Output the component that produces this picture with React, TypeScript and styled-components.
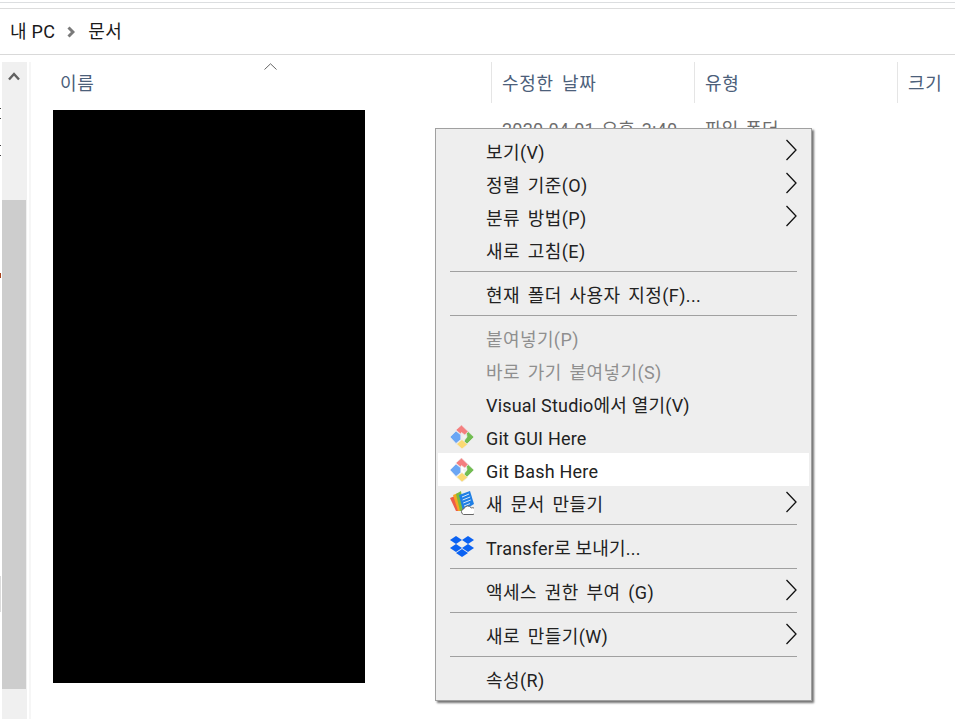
import React from "react";
import styled, { createGlobalStyle } from "styled-components";

const Global = createGlobalStyle`
  html, body { margin: 0; padding: 0; background: #fff; }
  body {
    font-family: Roboto, "Noto Sans CJK KR", sans-serif;
    overflow: hidden;
  }
  #root { height: 719px; }
`;

const Page = styled.div`
  position: relative;
  width: 955px;
  height: 719px;
  display: flex;
  flex-direction: column;
  overflow: hidden;
  background: #fff;
`;

const TopStrip = styled.div`
  height: 5px;
  margin-top: 2px;
  border-top: 1px solid #dcdee0;
  border-bottom: 1px solid #dcdcdc;
  flex: none;
`;

const Breadcrumb = styled.nav`
  height: 45px;
  flex: none;
  display: flex;
  align-items: center;
  padding-left: 10px;
  border-bottom: 1px solid #d9d9d9;
  font-size: 18px;
  line-height: 24px;
  color: #1a1a1a;
`;

const Crumb = styled.span`
  white-space: nowrap;
  letter-spacing: 0.3px;
`;

const CrumbSep = styled.svg`
  width: 8px;
  height: 12px;
  margin: 0 13px 0 12px;
  flex: none;
`;

const Body = styled.div`
  flex: 1;
  min-height: 0;
  display: flex;
  padding-top: 7px;
`;

const EdgeStrip = styled.div`
  width: 2px;
  flex: none;
  display: flex;
  flex-direction: column;
`;

const EdgeMark = styled.i<{ $h: number; $gap: number; $c: string }>`
  display: block;
  width: 1px;
  height: ${(p) => p.$h}px;
  margin-top: ${(p) => p.$gap}px;
  background: ${(p) => p.$c};
`;

const ScrollTrack = styled.div`
  width: 25px;
  flex: none;
  background: #f0f0f0;
  display: flex;
  flex-direction: column;
`;

const ScrollButton = styled.div`
  height: 138px;
  flex: none;
  display: flex;
  justify-content: center;
  align-items: flex-start;
  padding: 10px 1px 0 0;
  box-sizing: border-box;
`;

const ScrollThumb = styled.div`
  width: 24px;
  height: 489px;
  background: #cdcdcd;
`;

const Gutter = styled.div`
  width: 2px;
  margin-left: 2px;
  flex: none;
  background: #f6f6f6;
`;

const Content = styled.div`
  flex: 1;
  min-width: 0;
  display: flex;
  flex-direction: column;
`;

const Columns = styled.div`
  display: grid;
  grid-template-columns: 460px 203px 203px 1fr;
`;

const HeaderRow = styled(Columns)`
  height: 41px;
  position: relative;
`;

const HeaderCell = styled.div<{ $first?: boolean }>`
  display: flex;
  align-items: center;
  padding-left: ${(p) => (p.$first ? "29px" : "10px")};
  padding-top: 2px;
  border-left: ${(p) => (p.$first ? "none" : "1px solid #e5e5e5")};
  font-size: 18px;
  line-height: 24px;
  letter-spacing: 0.7px;
  word-spacing: 3px;
  color: #4c607a;
  white-space: nowrap;
`;

const SortMark = styled.svg`
  position: absolute;
  left: 233px;
  top: 1px;
  width: 13px;
  height: 7px;
`;

const FileRow = styled(Columns)`
  margin-top: 7px;
`;

const NameCell = styled.div`
  padding-left: 22px;
`;

const Redaction = styled.div`
  width: 312px;
  height: 573px;
  background: #000;
`;

const DataCell = styled.div`
  padding: 8px 0 0 11px;
  font-size: 18px;
  letter-spacing: 0.2px;
  word-spacing: 2px;
  line-height: 24px;
  color: #6d6d6d;
  white-space: nowrap;
`;

const Menu = styled.div`
  position: absolute;
  left: 435px;
  top: 128px;
  width: 377px;
  box-sizing: border-box;
  border: 1px solid #a0a0a0;
  background: #eeeeee;
  padding: 5px 2px;
  box-shadow: 2px 2px 2px rgba(0, 0, 0, 0.55);
  color: #1a1a1a;
`;

const Item = styled.div<{ $active?: boolean; $disabled?: boolean }>`
  height: 33px;
  display: flex;
  align-items: center;
  padding: 0 12px;
  font-size: 18px;
  line-height: 24px;
  background: ${(p) => (p.$active ? "#fff" : "transparent")};
  color: ${(p) => (p.$disabled ? "#8f8f8f" : "#222")};
`;

const IconSlot = styled.span`
  width: 24px;
  height: 24px;
  flex: none;
  margin-right: 12px;
  display: flex;
  align-items: center;
  justify-content: center;
`;

const Label = styled.span<{ $latin?: boolean }>`
  flex: 1;
  white-space: nowrap;
  padding-top: 4px;
  letter-spacing: ${(p) => (p.$latin ? "0.2px" : "0.4px")};
  word-spacing: ${(p) => (p.$latin ? "0" : "3px")};
`;

const Arrow = styled.svg`
  width: 12px;
  height: 22px;
  flex: none;
  margin-top: -2px;
`;

const Separator = styled.div`
  height: 1px;
  margin: 5px 12px;
  background: #a0a0a0;
`;

const Chevron = () => (
  <Arrow viewBox="0 0 12 22">
    <polyline points="1.5,1 11,11 1.5,21" fill="none" stroke="#111" strokeWidth="1.3" />
  </Arrow>
);

const GitIcon = () => (
  <svg width="24" height="24" viewBox="0 0 24 24">
    <g stroke="#eeeeee" strokeWidth="0.7">
      <polygon points="5.8,5 11.5,0 18.2,6.6 14.8,10 11.5,7.5 10.5,9" fill="#f47f7f" />
      <polygon points="16.5,8.5 18.2,6.6 24,12 16.5,19.5 14,16.5 15,14.5 17,12" fill="#72bd52" />
      <polygon points="12,14.5 17.5,19.5 12,24 6.5,19" fill="#fbd972" />
      <polygon points="0,12 6,6 10.8,9.8 10.8,14.5 6,18.5" fill="#6ba6f4" />
    </g>
    <circle cx="14.6" cy="12" r="1.6" fill="#f2f2f2" />
  </svg>
);

const DocsIcon = () => (
  <svg width="24" height="24" viewBox="0 0 24 24">
    <polygon points="0,7 5,5 10,20 6,20" fill="#ee5a4a" />
    <polygon points="3,4 8,2 12,20 8,20" fill="#f5a623" />
    <polygon points="6,3 11,0 14,20 10,20" fill="#7dbb3c" />
    <polygon points="9,4 20,0 24,13 13,20" fill="#1f7fe5" />
    <path d="M12 6l7-3M12.6 9l7.6-3M13.2 12l7.6-3M14 15l6-2.4" stroke="#d5e9fb" strokeWidth="1" />
    <path d="M13.5 23.5a3 3 0 0 1 .5-5.8a4 4 0 0 1 7.2-.8a3.3 3.3 0 0 1 1.8 6.6z" fill="#fff" stroke="#666" strokeWidth="1" />
  </svg>
);

const DropboxIcon = () => (
  <svg width="24" height="22" viewBox="0 0 24 22">
    <g fill="#0b62f2">
      <polygon points="6,0 12,4 6,8 0,4" />
      <polygon points="18,0 24,4 18,8 12,4" />
      <polygon points="6,8 12,12 6,16 0,12" />
      <polygon points="18,8 24,12 18,16 12,12" />
      <polygon points="12,13 18,17 12,21 6,17" />
    </g>
  </svg>
);

type Row =
  | { sep: true }
  | {
      sep?: false;
      label: string;
      icon?: React.ReactNode;
      sub?: boolean;
      disabled?: boolean;
      active?: boolean;
      latin?: boolean;
    };

const rows: Row[] = [
  { label: "보기(V)", sub: true },
  { label: "정렬 기준(O)", sub: true },
  { label: "분류 방법(P)", sub: true },
  { label: "새로 고침(E)" },
  { sep: true },
  { label: "현재 폴더 사용자 지정(F)..." },
  { sep: true },
  { label: "붙여넣기(P)", disabled: true },
  { label: "바로 가기 붙여넣기(S)", disabled: true },
  { label: "Visual Studio에서 열기(V)", latin: true },
  { label: "Git GUI Here", icon: <GitIcon />, latin: true },
  { label: "Git Bash Here", icon: <GitIcon />, active: true, latin: true },
  { label: "새 문서 만들기", icon: <DocsIcon />, sub: true },
  { sep: true },
  { label: "Transfer로 보내기...", icon: <DropboxIcon />, latin: true },
  { sep: true },
  { label: "액세스 권한 부여 (G)", sub: true },
  { sep: true },
  { label: "새로 만들기(W)", sub: true },
  { sep: true },
  { label: "속성(R)" },
];

export default function App() {
  return (
    <Page>
      <Global />
      <TopStrip />
      <Breadcrumb>
        <Crumb>내 PC</Crumb>
        <CrumbSep viewBox="0 0 8 12">
          <polyline points="1.5,1.5 6,6 1.5,10.5" fill="none" stroke="#7a7a7a" strokeWidth="3" />
        </CrumbSep>
        <Crumb>문서</Crumb>
      </Breadcrumb>
      <Body>
        <EdgeStrip>
          <EdgeMark $h={1} $gap={46} $c="#444" />
          <EdgeMark $h={1} $gap={9} $c="#444" />
          <EdgeMark $h={1} $gap={26} $c="#444" />
          <EdgeMark $h={1} $gap={9} $c="#444" />
          <EdgeMark $h={5} $gap={117} $c="#a8401a" />
          <EdgeMark $h={36} $gap={298} $c="#dcdcdc" />
        </EdgeStrip>
        <ScrollTrack>
          <ScrollButton>
            <svg width="12" height="9" viewBox="0 0 12 9">
              <polyline points="1,7.5 6,2 11,7.5" fill="none" stroke="#606060" strokeWidth="2.4" />
            </svg>
          </ScrollButton>
          <ScrollThumb />
        </ScrollTrack>
        <Gutter />
        <Content>
          <HeaderRow>
            <HeaderCell $first>이름</HeaderCell>
            <HeaderCell>수정한 날짜</HeaderCell>
            <HeaderCell>유형</HeaderCell>
            <HeaderCell>크기</HeaderCell>
            <SortMark viewBox="0 0 13 7">
              <polyline points="0.5,6.5 6.5,0.8 12.5,6.5" fill="none" stroke="#666" strokeWidth="1" />
            </SortMark>
          </HeaderRow>
          <FileRow>
            <NameCell>
              <Redaction />
            </NameCell>
            <DataCell>2020-04-01 오후 3:40</DataCell>
            <DataCell>파일 폴더</DataCell>
            <DataCell />
          </FileRow>
        </Content>
      </Body>
      <Menu>
        {rows.map((r, i) =>
          r.sep ? (
            <Separator key={i} />
          ) : (
            <Item key={i} $active={r.active} $disabled={r.disabled}>
              <IconSlot>{r.icon}</IconSlot>
              <Label $latin={r.latin}>{r.label}</Label>
              {r.sub && <Chevron />}
            </Item>
          )
        )}
      </Menu>
    </Page>
  );
}
